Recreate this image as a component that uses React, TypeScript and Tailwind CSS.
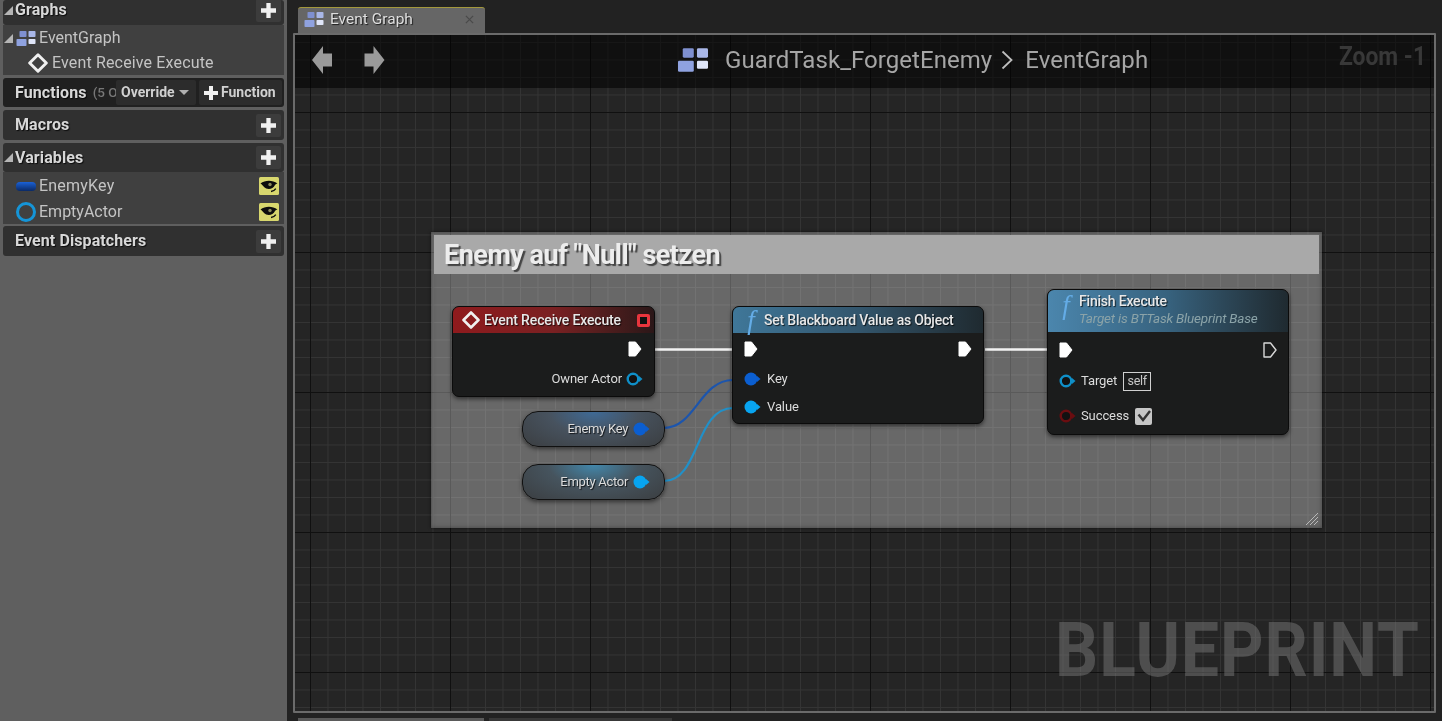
import React from "react";

const shadow = "[text-shadow:1px_1px_1px_rgba(0,0,0,0.75)]";

function GraphIcon({ className }: { className: string }) {
  return (
    <svg viewBox="0 0 19 15" className={className}>
      <g>
        <rect x="3" y="0" width="7" height="6" rx="0.8" fill="#7f90d0" />
        <rect x="12" y="0" width="7" height="6" rx="0.8" fill="#a9b7e8" />
        <rect x="0" y="8" width="10" height="7" rx="0.8" fill="#8fa2e0" />
        <rect x="12" y="8" width="7" height="5" rx="0.8" fill="#dfe5f8" />
      </g>
    </svg>
  );
}

function Plus({ small }: { small?: boolean }) {
  return (
    <svg viewBox="0 0 14 14" className={small ? "w-[14px] h-[14px]" : "w-[15px] h-[15px]"}>
      <path d="M5 0h4v5h5v4H9v5H5V9H0V5h5z" fill="#f0f0f0" />
    </svg>
  );
}

function Tri() {
  return (
    <svg viewBox="0 0 8 8" className="w-[9px] h-[9px] shrink-0">
      <path d="M8 0v8H0z" fill="#b5b5b5" />
    </svg>
  );
}

function Diamond({ className }: { className: string }) {
  return (
    <svg viewBox="0 0 18 18" className={className}>
      <path d="M9 1.500 16.500 9 9 16.500 1.500 9z" fill="none" stroke="#f0f0f0" strokeWidth="2.600" strokeLinejoin="round" />
    </svg>
  );
}

function Eye() {
  return (
    <svg viewBox="0 0 20 18" className="w-[20px] h-[18px] shrink-0">
      <rect width="20" height="18" rx="1.500" fill="#d8d76e" />
      <path d="M1.500 6.500C6 3 13 2.500 18.500 6.500c-1.200.3-2 .8-2.500 1.500C14 12.500 8 13 5 10 4 8.800 3 7.500 1.500 6.500z" fill="#0d0d0d" />
      <circle cx="11" cy="7.500" r="1.700" fill="#8a8a5a" />
      <path d="M12 14.500c2-.2 3.800-1.200 4.800-2.800" stroke="#0d0d0d" strokeWidth="1.300" fill="none" />
    </svg>
  );
}

function SectionHeader({ title, arrow, action, dark, h, children }: { title: string; arrow?: boolean; action?: boolean; dark?: boolean; h: string; children?: React.ReactNode }) {
  return (
    <div className={`flex items-center shrink-0 ${h} ${dark ? "bg-[#202020]" : "bg-[#303030]"} rounded-[3px] pr-[3px]`}>
      <div className="w-[12px] pl-[1px] flex items-center">{arrow && <Tri />}</div>
      <span className={`text-[16px] tracking-[0.1px] font-bold text-[#d8d8d8] ${shadow}`}>{title}</span>
      {children}
      {action && (
        <span className="ml-auto w-[25px] h-[23px] bg-[#3c3c3c] rounded-[2px] flex items-center justify-center">
          <Plus />
        </span>
      )}
    </div>
  );
}

function Sidebar() {
  return (
    <aside className="w-[287px] h-full shrink-0 bg-[#5f5f5f] pl-[3px] pr-[3px] flex flex-col">
      <SectionHeader title="Graphs" arrow action h="h-[25px] pb-[5px]" />
      <div className="bg-[#404040] h-[50px] pt-[1px] flex flex-col text-[16px] text-[#c4c4c4]">
        <div className="h-[25px] flex items-center">
          <div className="pl-[1px] w-[13px] flex"><Tri /></div>
          <GraphIcon className="w-[20px] h-[15px]" />
          <span className="ml-[3px]">EventGraph</span>
        </div>
        <div className="h-[25px] flex items-center pl-[25px]">
          <Diamond className="w-[20px] h-[20px]" />
          <span className="ml-[4px] tracking-[0.15px]">Event Receive Execute</span>
        </div>
      </div>
      <div className="h-[3px] shrink-0" />
      <SectionHeader title="Functions" dark h="h-[29px] relative">
        <span className="ml-[6px] text-[13.5px] text-[#777] font-medium w-[25px] overflow-hidden whitespace-nowrap">(5 O</span>
        <span className="absolute left-[113px] top-[2px] h-[25px] w-[80px] bg-[#2c2c2c] rounded-[2px] flex items-center pl-[5px] text-[14px] font-bold text-[#d0d0d0] gap-[4px]">
          Override
          <svg viewBox="0 0 10 5" className="w-[10px] h-[5px]"><path d="M0 0h10L5 5z" fill="#b0b0b0" /></svg>
        </span>
        <span className="absolute left-[196px] top-[2px] h-[25px] w-[83px] bg-[#2c2c2c] rounded-[2px] flex items-center pl-[5px] text-[14px] font-bold text-[#d0d0d0] gap-[3px]">
          <Plus small />
          Function
        </span>
      </SectionHeader>
      <div className="h-[3px] shrink-0" />
      <SectionHeader title="Macros" action h="h-[30px]" />
      <div className="h-[3px] shrink-0" />
      <SectionHeader title="Variables" arrow action h="h-[29px]" />
      <div className="bg-[#404040] h-[52px] pt-[1px] flex flex-col text-[16px] text-[#c4c4c4] pr-[5px]">
        <div className="h-[26px] flex items-center pl-[13px]">
          <span className="w-[20px] h-[9px] rounded-[4px] bg-gradient-to-b from-[#1a62d8] to-[#0b2a66]" />
          <span className="ml-[3px] tracking-[0.2px]">EnemyKey</span>
          <span className="ml-auto"><Eye /></span>
        </div>
        <div className="h-[25px] flex items-center pl-[13px]">
          <span className="w-[20px] h-[20px] rounded-full border-[3px] border-[#1595d8]" />
          <span className="ml-[3px]">EmptyActor</span>
          <span className="ml-auto"><Eye /></span>
        </div>
      </div>
      <div className="h-[2px] shrink-0" />
      <SectionHeader title="Event Dispatchers" action h="h-[30px]" />
    </aside>
  );
}

function ExecPin({ outline }: { outline?: boolean }) {
  return (
    <svg viewBox="0 0 14 16" className="w-[14px] h-[16px] shrink-0">
      <path d="M1 1h6.500L13 8l-5.500 7H1z" fill={outline ? "none" : "#ffffff"} stroke={outline ? "#d8d8d8" : "#ffffff"} strokeWidth={outline ? 1.4 : 1} strokeLinejoin="round" />
    </svg>
  );
}

function DataPin({ color, ring }: { color: string; ring?: boolean }) {
  return (
    <svg viewBox="0 0 17 14" className="w-[17px] h-[14px] shrink-0">
      <path d="M13 4l3.500 3L13 10z" fill={color} />
      {ring ? (
        <circle cx="7" cy="7" r="5.300" fill="#111" stroke={color} strokeWidth="2.400" />
      ) : (
        <circle cx="7" cy="7" r="6.500" fill={color} />
      )}
    </svg>
  );
}

const nodeBase = "absolute rounded-[7px] border border-[#0b0b0b] bg-[#1b1c1c] shadow-[0_2px_4px_rgba(0,0,0,0.55)] overflow-hidden";
const nodeTitle = `text-[14px] font-medium text-[#e8e8e8] tracking-[-0.2px] ${shadow}`;
const pinLabel = "text-[13px] text-[#dcdcdc] tracking-[-0.1px]";

function FuncIcon() {
  return <span className="font-['Liberation_Serif',serif] italic text-[27px] leading-none text-[#64ace6] w-[18px] text-center shrink-0">f</span>;
}

function Pill({ label, color, glow, className }: { label: string; color: string; glow: string; className: string }) {
  return (
    <div className={`absolute w-[143px] h-[36px] rounded-[16px] border-[1.5px] border-[#111] ${glow} shadow-[0_2px_4px_rgba(0,0,0,0.5)] flex items-center justify-end pr-[14px] gap-[5px] ${className}`}>
      <span className={`text-[13px] text-[#dcdcdc] tracking-[-0.3px] ${shadow}`}>{label}</span>
      <DataPin color={color} />
    </div>
  );
}

function Canvas() {
  return (
    <div className="relative flex-1 border-2 border-[#6b6b6b] rounded-[1px] overflow-hidden bg-[#252525] bg-[linear-gradient(#101010_1px,transparent_1px),linear-gradient(90deg,#101010_1px,transparent_1px),linear-gradient(#343434_1px,transparent_1px),linear-gradient(90deg,#343434_1px,transparent_1px)] bg-[size:140px_140px,140px_140px,17.5px_17.5px,17.5px_17.5px] bg-[position:15px_77px,15px_77px,15px_7px,15px_7px]">
      {/* top bar */}
      <div className="absolute left-0 right-0 top-0 h-[53px] bg-[rgba(0,0,0,0.55)] flex items-center">
        <svg viewBox="0 0 20 28" className="absolute left-[17px] top-[11px] w-[20px] h-[28px]">
          <path d="M0 14 11 0v7.500h9v13h-9V28z" fill="#9a9a9a" />
        </svg>
        <svg viewBox="0 0 20 28" className="absolute left-[69px] top-[11px] w-[21px] h-[28px]">
          <path d="M20 14 9 0v7.500H0v13h9V28z" fill="#9a9a9a" />
        </svg>
        <div className="absolute left-[383px] top-[13px] flex items-center text-[24px] tracking-[0.05px] leading-none text-[#a6a6a6]">
          <GraphIcon className="w-[30px] h-[24px]" />
          <span className="ml-[17px]">GuardTask_ForgetEnemy</span>
          <svg viewBox="0 0 12 20" className="ml-[9px] w-[12px] h-[20px]"><path d="M1.500 1.500 10.500 10 1.500 18.500" fill="none" stroke="#bdbdbd" strokeWidth="1.800" /></svg>
          <span className="ml-[12px]">EventGraph</span>
        </div>
        <span className="absolute right-[8px] top-[8px] text-[26px] font-bold leading-none text-[#383838] scale-x-[0.88] origin-right">Zoom -1</span>
      </div>

      {/* watermark */}
      <span className="absolute right-[14px] top-[577px] text-[76px] leading-none font-bold text-[rgba(120,120,120,0.5)] scale-x-[0.89] origin-right tracking-[1px]">BLUEPRINT</span>

      {/* comment box */}
      <div className="absolute left-[136px] top-[197px] w-[891px] h-[296px] bg-[rgba(255,255,255,0.31)] shadow-[inset_0_0_5px_rgba(0,0,0,0.35),0_0_3px_rgba(0,0,0,0.6)] pt-[3px] px-[3px]">
        <div className="h-[39px] bg-[#a9a9a9] flex items-center pl-[10px] pt-[1px]">
          <span className="text-[27px] font-bold text-[#ededed] tracking-[-0.5px] [text-shadow:2px_2px_1px_rgba(0,0,0,0.6)]">Enemy auf "Null" setzen</span>
        </div>
        <svg viewBox="0 0 14 14" className="absolute right-[3px] bottom-[2px] w-[14px] h-[14px]">
          <path d="M1 13 13 1M5 13 13 5M9 13l4-4" stroke="#b8b8b8" strokeWidth="1" />
        </svg>
      </div>

      {/* wires */}
      <svg viewBox="295 35 1143 680" className="absolute left-0 top-0 w-[1143px] h-[680px] pointer-events-none">
        <path d="M655 349.500H732M985 349.500H1047" stroke="#f2f2f2" strokeWidth="2.400" fill="none" />
        <path d="M664 428C695 428 700 380 733 380" stroke="#1c55ad" strokeWidth="2.200" fill="none" />
        <path d="M664 481C700 481 695 408 733 408" stroke="#2190c8" strokeWidth="2.200" fill="none" />
      </svg>

      {/* Event node */}
      <div className={`${nodeBase} left-[157px] top-[271px] w-[203px] h-[91px]`}>
        <div className="h-[26px] bg-gradient-to-r from-[#8f1a1d] via-[#7a2022] to-[#2b1718] flex items-center pl-[9px]">
          <Diamond className="w-[18px] h-[18px]" />
          <span className={`${nodeTitle} ml-[4px] tracking-[-0.15px]`}>Event Receive Execute</span>
          <span className="ml-auto mr-[4px] w-[13px] h-[13px] rounded-[2px] bg-[#111] border-[3px] border-[#e8353d]" />
        </div>
        <div className="flex flex-col items-end pr-[11px]">
          <div className="h-[16px] mt-[8px] pr-[1px]"><ExecPin /></div>
          <div className="h-[16px] mt-[14px] flex items-center gap-[4px]">
            <span className={pinLabel}>Owner Actor</span>
            <DataPin color="#0f8fc8" ring />
          </div>
        </div>
      </div>

      {/* Set Blackboard node */}
      <div className={`${nodeBase} left-[437px] top-[271px] w-[252px] h-[118px]`}>
        <div className="h-[26px] bg-gradient-to-r from-[#3f7799] via-[#33566d] to-[#1f2a30] flex items-center pl-[9px]">
          <FuncIcon />
          <span className={`${nodeTitle} ml-[4px] text-[13.800px]`}>Set Blackboard Value as Object</span>
        </div>
        <div className="flex flex-col px-[11px]">
          <div className="h-[16px] mt-[8px] flex justify-between"><ExecPin /><ExecPin /></div>
          <div className="h-[16px] mt-[14px] flex items-center gap-[6px]">
            <DataPin color="#0b5ed0" />
            <span className={pinLabel}>Key</span>
          </div>
          <div className="h-[16px] mt-[12px] flex items-center gap-[6px]">
            <DataPin color="#08a4f0" />
            <span className={pinLabel}>Value</span>
          </div>
        </div>
      </div>

      {/* Finish Execute node */}
      <div className={`${nodeBase} left-[752px] top-[254px] w-[242px] h-[146px]`}>
        <div className="h-[42px] bg-gradient-to-r from-[#4b86ad] via-[#37627e] to-[#1f2a30] flex items-start pl-[9px] pt-[2px]">
          <FuncIcon />
          <div className="ml-[4px] flex flex-col">
            <span className={`${nodeTitle} leading-[18px]`}>Finish Execute</span>
            <span className="text-[13.5px] italic leading-[17px] text-[#8ba3a8] tracking-[-0.2px]">Target is BTTask Blueprint Base</span>
          </div>
        </div>
        <div className="flex flex-col pl-[11px] pr-[11px]">
          <div className="h-[16px] mt-[10px] flex justify-between"><ExecPin /><ExecPin outline /></div>
          <div className="h-[20px] mt-[13px] flex items-center gap-[5px]">
            <DataPin color="#0f8fc8" ring />
            <span className={pinLabel}>Target</span>
            <span className="ml-[1px] w-[28px] h-[19px] border border-[#d0d0d0] text-[12.5px] text-[#c8c8c8] flex items-center justify-center tracking-[-0.3px]">self</span>
          </div>
          <div className="h-[18px] mt-[16px] flex items-center gap-[5px]">
            <DataPin color="#6a0d10" ring />
            <span className={pinLabel}>Success</span>
            <span className="ml-[1px] w-[17px] h-[17px] rounded-[2px] bg-[#c6c6c6] flex items-center justify-center">
              <svg viewBox="0 0 14 14" className="w-[14px] h-[14px]"><path d="M1.500 5.500 6 11 13 2" fill="none" stroke="#333" strokeWidth="2.400" /></svg>
            </span>
          </div>
        </div>
      </div>

      {/* Variable pills */}
      <Pill label="Enemy Key" color="#0b5ed0" glow="bg-[radial-gradient(ellipse_at_50%_0%,#3f6a96_0%,#47525e_45%,#3b3e41_100%)]" className="left-[227px] top-[376px]" />
      <Pill label="Empty Actor" color="#08a4f0" glow="bg-[radial-gradient(ellipse_at_50%_0%,#4287ab_0%,#46545e_45%,#3b3e41_100%)]" className="left-[227px] top-[429px]" />
    </div>
  );
}

export default function App() {
  return (
    <div className="w-[1442px] h-[721px] overflow-hidden flex bg-[#222222] font-['Roboto',sans-serif] blur-[0.6px]">
      <Sidebar />
      <main className="flex-1 flex flex-col pl-[6px] pr-[6px] pt-[7px] min-w-0">
        <div className="h-[26px] flex pl-[5px]">
          <div className="w-[187px] h-[27px] bg-[#666666] border-t border-[#a3983c] rounded-t-[3px] flex items-center pl-[6px] pb-[3px] text-[15.500px] text-[#dedede]">
            <GraphIcon className="w-[20px] h-[15px]" />
            <span className={`ml-[6px] ${shadow}`}>Event Graph</span>
            <svg viewBox="0 0 10 10" className="ml-auto mr-[11px] w-[9px] h-[9px]"><path d="M1 1l8 8M9 1 1 9" stroke="#4a4a4a" strokeWidth="1.400" /></svg>
          </div>
        </div>
        <Canvas />
        <div className="h-[8px] flex pl-[5px] gap-[5px] pt-[5px]">
          <div className="w-[186px] h-[3px] bg-[#5a5a5a]" />
          <div className="w-[183px] h-[3px] bg-[#383838]" />
        </div>
      </main>
    </div>
  );
}
